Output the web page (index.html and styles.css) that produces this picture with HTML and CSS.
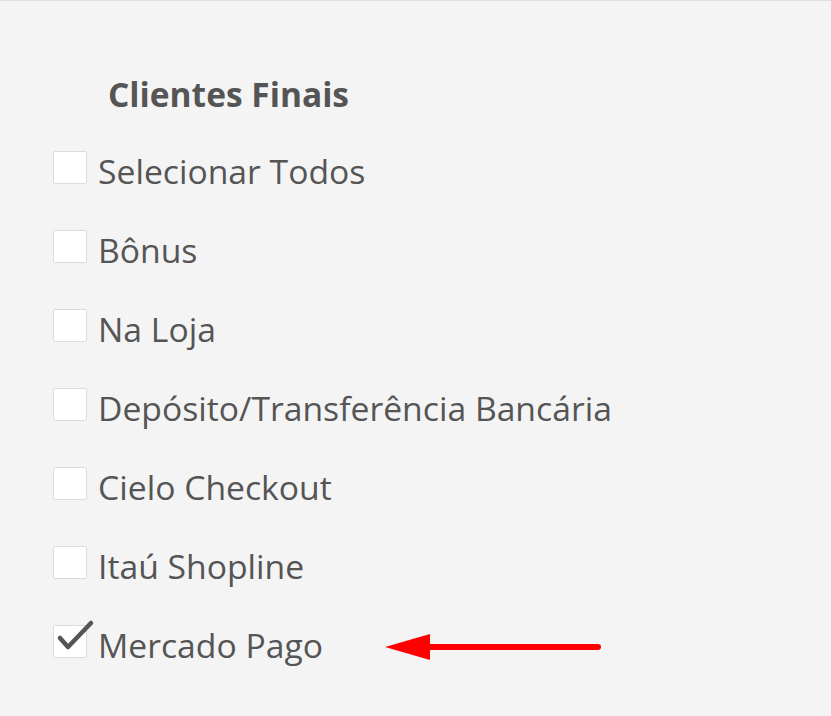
FILE: index.html
```html
<!DOCTYPE html>
<html lang="pt-BR">
<head>
  <meta charset="UTF-8" />
  <title>Clientes Finais</title>
  <link rel="stylesheet" href="styles.css">
</head>
<body>
  <div class="panel">
    <h2 class="panel-title">Clientes Finais</h2>
    <ul class="option-list">
      <li class="option"><span class="box"></span><span class="label">Selecionar Todos</span></li>
      <li class="option"><span class="box"></span><span class="label">Bônus</span></li>
      <li class="option"><span class="box"></span><span class="label">Na Loja</span></li>
      <li class="option"><span class="box"></span><span class="label">Depósito/Transferência Bancária</span></li>
      <li class="option"><span class="box"></span><span class="label">Cielo Checkout</span></li>
      <li class="option"><span class="box"></span><span class="label">Itaú Shopline</span></li>
      <li class="option">
        <span class="box checked">
          <svg class="tick" width="40" height="36" viewBox="0 0 40 36">
            <path d="M5 19 L13 28 L36 4" fill="none" stroke="#555" stroke-width="4.5" stroke-linecap="round" stroke-linejoin="round"/>
          </svg>
        </span>
        <span class="label">Mercado Pago</span>
        <svg class="arrow" width="220" height="30" viewBox="0 0 220 30">
          <path d="M40 15 H213" stroke="#ff0000" stroke-width="6" stroke-linecap="round"/>
          <path d="M0 15 L45 2 L45 28 Z" fill="#ff0000"/>
        </svg>
      </li>
    </ul>
  </div>
</body>
</html>
```

FILE: styles.css
```css
body {
  margin: 0;
  background: #f4f4f4;
  font-family: 'Open Sans', 'Liberation Sans', sans-serif;
  color: #555;
}

.panel {
  border-top: 1px solid #dedede;
  height: 715px;
  padding: 0 0 0 53px;
}

.panel-title {
  margin: 0;
  padding: 73px 0 0 55px;
  font-size: 33.5px;
  font-weight: 700;
  line-height: 40px;
  color: #555;
}

.option-list {
  list-style: none;
  margin: 0;
  padding: 17px 0 0;
}

.option {
  display: flex;
  align-items: center;
  height: 79px;
  position: relative;
}

.box {
  width: 34px;
  height: 33px;
  background: #fff;
  border: 1px solid #dcdcdc;
  border-radius: 2px;
  box-sizing: border-box;
  margin: -6px 11px 0 0;
  position: relative;
}

.tick {
  position: absolute;
  left: 1px;
  top: -7px;
}

.label {
  font-size: 33.7px;
  line-height: 40px;
}

.arrow {
  margin: 4px 0 0 62px;
}
```
